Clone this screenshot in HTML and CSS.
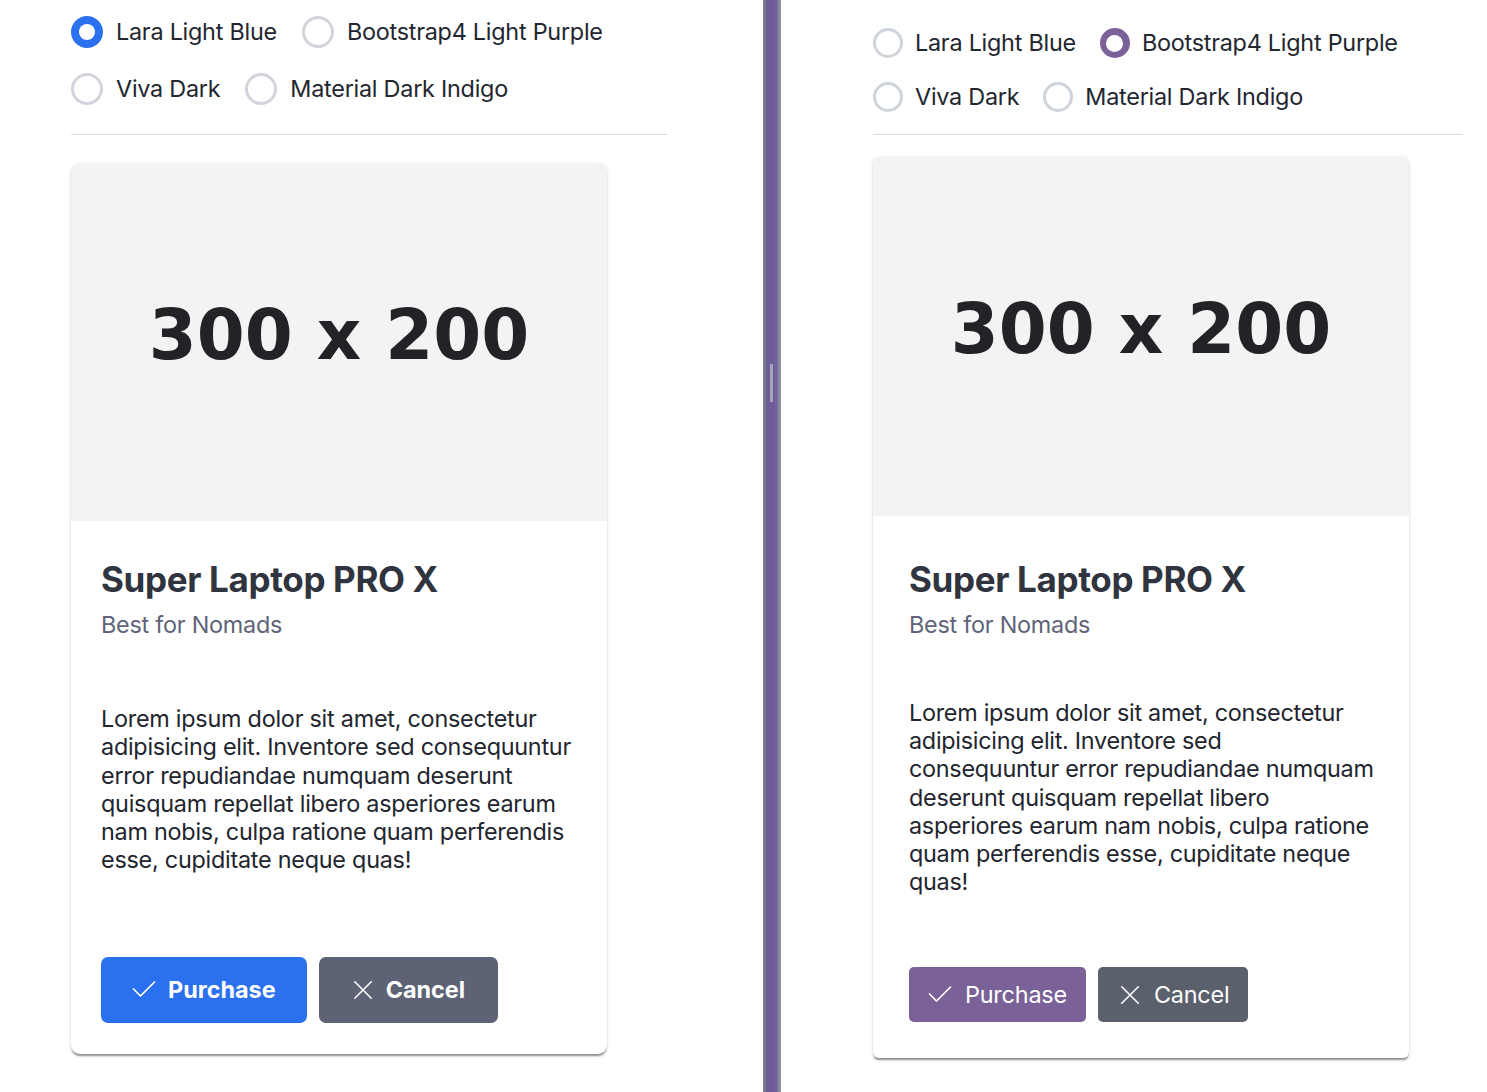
FILE: index.html
```html
<!DOCTYPE html>
<html lang="en">
<head>
<meta charset="utf-8">
<title>Theme preview</title>
<link rel="stylesheet" href="styles.css">
</head>
<body>
<div class="split">
  <section class="pane pane-lara">
    <div class="themes">
      <label class="opt"><span class="radio is-checked"></span><span class="opt-label">Lara Light Blue</span></label>
      <label class="opt"><span class="radio"></span><span class="opt-label">Bootstrap4 Light Purple</span></label>
      <label class="opt"><span class="radio"></span><span class="opt-label">Viva Dark</span></label>
      <label class="opt"><span class="radio"></span><span class="opt-label">Material Dark Indigo</span></label>
    </div>
    <hr class="sep">
    <article class="card">
      <div class="card-media"><span class="ph">300 x 200</span></div>
      <div class="card-body">
        <h2 class="card-title">Super Laptop PRO X</h2>
        <div class="card-subtitle">Best for Nomads</div>
        <p class="card-text">Lorem ipsum dolor sit amet, consectetur adipisicing elit. Inventore sed consequuntur error repudiandae numquam deserunt quisquam repellat libero asperiores earum nam nobis, culpa ratione quam perferendis esse, cupiditate neque quas!</p>
        <div class="card-footer">
          <button class="btn btn-primary"><svg class="ico" viewBox="0 0 24 24"><polyline points="1.5,11 8.5,18 22.5,4" /></svg><span>Purchase</span></button>
          <button class="btn btn-secondary"><svg class="ico" viewBox="0 0 24 24"><path d="M3 3 L21 21 M21 3 L3 21" /></svg><span>Cancel</span></button>
        </div>
      </div>
    </article>
  </section>
  <div class="gutter"><span class="grip"></span></div>
  <section class="pane pane-bs">
    <div class="themes">
      <label class="opt"><span class="radio"></span><span class="opt-label">Lara Light Blue</span></label>
      <label class="opt"><span class="radio is-checked"></span><span class="opt-label">Bootstrap4 Light Purple</span></label>
      <label class="opt"><span class="radio"></span><span class="opt-label">Viva Dark</span></label>
      <label class="opt"><span class="radio"></span><span class="opt-label">Material Dark Indigo</span></label>
    </div>
    <hr class="sep">
    <article class="card">
      <div class="card-media"><span class="ph">300 x 200</span></div>
      <div class="card-body">
        <h2 class="card-title">Super Laptop PRO X</h2>
        <div class="card-subtitle">Best for Nomads</div>
        <p class="card-text">Lorem ipsum dolor sit amet, consectetur adipisicing elit. Inventore sed consequuntur error repudiandae numquam deserunt quisquam repellat libero asperiores earum nam nobis, culpa ratione quam perferendis esse, cupiditate neque quas!</p>
        <div class="card-footer">
          <button class="btn btn-primary"><svg class="ico" viewBox="0 0 24 24"><polyline points="1.5,11 8.5,18 22.5,4" /></svg><span>Purchase</span></button>
          <button class="btn btn-secondary"><svg class="ico" viewBox="0 0 24 24"><path d="M3 3 L21 21 M21 3 L3 21" /></svg><span>Cancel</span></button>
        </div>
      </div>
    </article>
  </section>
</div>
</body>
</html>
```

FILE: styles.css
```css
* { box-sizing: border-box; }

html, body {
  margin: 0;
  padding: 0;
  background: #ffffff;
}

body {
  font-family: "Inter", "Noto Sans", sans-serif;
  font-size: 23.4px;
  letter-spacing: -0.25px;
  color: #23262f;
}

.split {
  display: flex;
  height: 1092px;
  overflow: hidden;
}

.pane {
  flex: none;
}

.pane-lara {
  width: 763px;
  padding: 16px 96px 0 71px;
}

.pane-bs {
  flex: 1;
  padding: 28px 24px 0 92px;
}

/* ---------- gutter ---------- */
.gutter {
  flex: none;
  width: 18px;
  height: 100%;
  background: linear-gradient(to right,
    #7a7c8c 0, #7a7c8c 3px,
    #6c5a98 3px, #6f5d9b 11px, #7a6aa4 15px,
    #8d8e9b 15px, #8d8e9b 18px);
  display: flex;
  justify-content: center;
  align-items: flex-start;
}

.grip {
  width: 3px;
  height: 38px;
  margin-top: 364px;
  margin-right: 2px;
  background: #a7a5b8;
}

/* ---------- theme radios ---------- */
.themes {
  display: flex;
  flex-wrap: wrap;
  column-gap: 25px;
  row-gap: 25px;
}

.pane-bs .themes {
  column-gap: 24px;
  row-gap: 24px;
}

.opt {
  display: flex;
  align-items: center;
  gap: 13px;
  height: 32px;
  cursor: pointer;
}

.pane-bs .opt {
  height: 30px;
  gap: 12px;
}

.opt-label {
  font-size: 23.4px;
  line-height: 28px;
  color: #23262f;
  white-space: nowrap;
}

.radio {
  flex: none;
  width: 32px;
  height: 32px;
  border-radius: 50%;
  border: 3px solid #d1d5db;
  background: #fff;
  position: relative;
}

.pane-bs .radio {
  width: 30px;
  height: 30px;
  border-color: #ced4da;
}

.radio.is-checked {
  border-color: #2b71ef;
  background: #2b71ef;
}

.radio.is-checked::after {
  content: "";
  position: absolute;
  left: 50%;
  top: 50%;
  width: 16px;
  height: 16px;
  margin: -8px 0 0 -8px;
  border-radius: 50%;
  background: #fff;
}

.pane-bs .radio.is-checked {
  border-color: #7a6198;
  background: #7a6198;
}

.pane-bs .radio.is-checked::after {
  width: 17px;
  height: 17px;
  margin: -8.5px 0 0 -8.5px;
}

/* ---------- separator ---------- */
.sep {
  border: 0;
  border-top: 1px solid #d8dae0;
  margin: 29px 0 28px;
  height: 0;
}

.pane-bs .sep {
  margin: 22px 0 22px;
}

/* ---------- card ---------- */
.card {
  width: 536px;
  background: #fff;
  border-radius: 9px;
  overflow: hidden;
  box-shadow: 0 3px 1.5px -1.5px rgba(0,0,0,0.25),
              0 1.5px 1.5px 0 rgba(0,0,0,0.14),
              0 1.5px 4px 0 rgba(0,0,0,0.12);
}

.pane-bs .card {
  border-radius: 6px;
}

.card-media {
  height: 358px;
  background: #f3f3f3;
  display: flex;
  align-items: center;
  justify-content: center;
  padding-bottom: 14px;
}

.pane-bs .card-media {
  height: 359px;
}

.ph {
  font-family: "DejaVu Sans", sans-serif;
  font-weight: 700;
  font-size: 69px;
  line-height: 1;
  letter-spacing: 0;
  color: #222326;
  white-space: nowrap;
}

.card-body {
  padding: 37px 30px 31px;
}

.pane-bs .card-body {
  padding: 42px 33px 36px 36px;
}

.card-title {
  margin: 0;
  font-size: 35px;
  line-height: 42px;
  font-weight: 700;
  color: #30343e;
  letter-spacing: -0.35px;
}

.card-subtitle {
  margin-top: 11px;
  font-size: 23.4px;
  line-height: 28px;
  color: #5f6478;
}

.card-text {
  margin: 66px 0 0;
  font-size: 23.4px;
  line-height: 28.3px;
  color: #22252e;
}

.pane-bs .card-text {
  margin-top: 60px;
  line-height: 28.2px;
  letter-spacing: -0.28px;
}

.card-footer {
  display: flex;
  gap: 12px;
  margin-top: 82px;
}

.pane-bs .card-footer {
  margin-top: 71px;
}

/* ---------- buttons ---------- */
.btn {
  display: inline-flex;
  align-items: center;
  gap: 12px;
  height: 66px;
  padding: 0 31px;
  border: 0;
  border-radius: 7px;
  font-family: inherit;
  font-size: 23.4px;
  font-weight: 700;
  letter-spacing: 0;
  color: #fff;
  cursor: pointer;
}

.btn-primary { background: #2b71ef; }
.btn-secondary { background: #5d6374; padding-right: 33px; }

.pane-bs .btn {
  height: 55px;
  padding: 0 19px;
  font-weight: 400;
  letter-spacing: -0.2px;
  border-radius: 5px;
  gap: 13px;
}

.pane-bs .btn-primary { background: #7a6198; }
.pane-bs .btn-secondary { background: #5b606d; }

.ico {
  width: 24px;
  height: 24px;
  fill: none;
  stroke: #fff;
  stroke-width: 1.7;
  stroke-linecap: round;
  stroke-linejoin: round;
}

.btn-secondary .ico {
  width: 22px;
  height: 22px;
  margin-left: 2px;
}
```
